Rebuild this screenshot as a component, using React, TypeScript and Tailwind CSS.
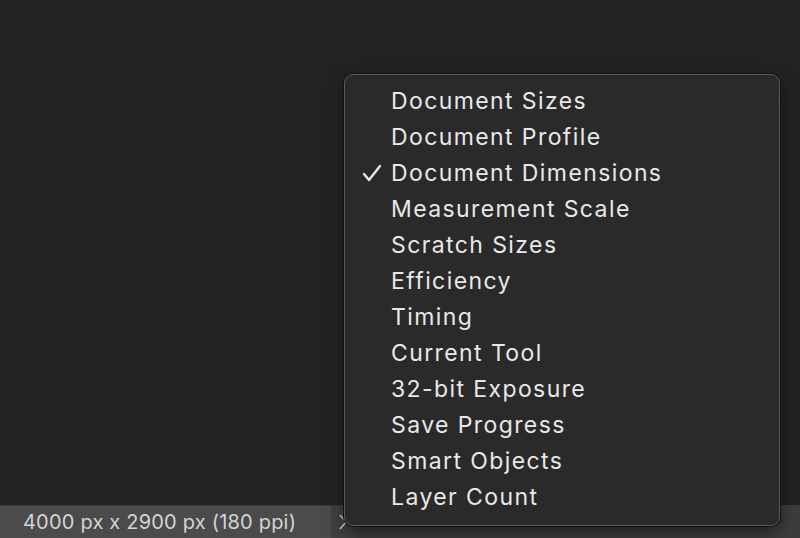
const items = [
  "Document Sizes",
  "Document Profile",
  "Document Dimensions",
  "Measurement Scale",
  "Scratch Sizes",
  "Efficiency",
  "Timing",
  "Current Tool",
  "32-bit Exposure",
  "Save Progress",
  "Smart Objects",
  "Layer Count",
]

export default function App() {
  return (
    <div className="relative w-[800px] h-[538px] bg-[#232323] flex flex-col overflow-hidden" style={{ fontFamily: "Inter, 'Liberation Sans', sans-serif" }}>
      <div className="flex-1" />
      <div className="h-[33px] flex border-t border-[#3a3a3a] bg-[#3d3d3d]">
        <div className="w-[331px] bg-[#4b4b4b] flex items-center pl-[23px] text-[20px] tracking-[0.2px] text-[#d4d4d4]">
          4000 px x 2900 px (180 ppi)
        </div>
        <div className="w-[24px] bg-[#414141] flex items-center justify-center text-[#d4d4d4]">
          <svg width="10" height="18" viewBox="0 0 10 18" fill="none" stroke="currentColor" strokeWidth="1.6">
            <path d="M2 2l6 7-6 7" />
          </svg>
        </div>
      </div>

      <div className="absolute left-[344px] top-[74px] w-[436px] h-[452px] rounded-[9px] bg-[#2a2a2a] border border-[#5b5b5b] shadow-[0_0_0_1px_#111,0_6px_18px_rgba(0,0,0,0.5)] pt-[8px]">
        {items.map((item) => (
          <div key={item} className="h-[36px] flex items-center text-[23px] text-[#e8e8e8] tracking-[1.4px]">
            <span className="w-[46px] flex justify-end pr-[9px]">
              {item === "Document Dimensions" && (
                <svg width="20" height="18" viewBox="0 0 20 18" fill="none" stroke="#e8e8e8" strokeWidth="2.4" strokeLinecap="round" strokeLinejoin="round">
                  <path d="M2 10l5 6L18 2" />
                </svg>
              )}
            </span>
            <span>{item}</span>
          </div>
        ))}
      </div>
    </div>
  )
}
